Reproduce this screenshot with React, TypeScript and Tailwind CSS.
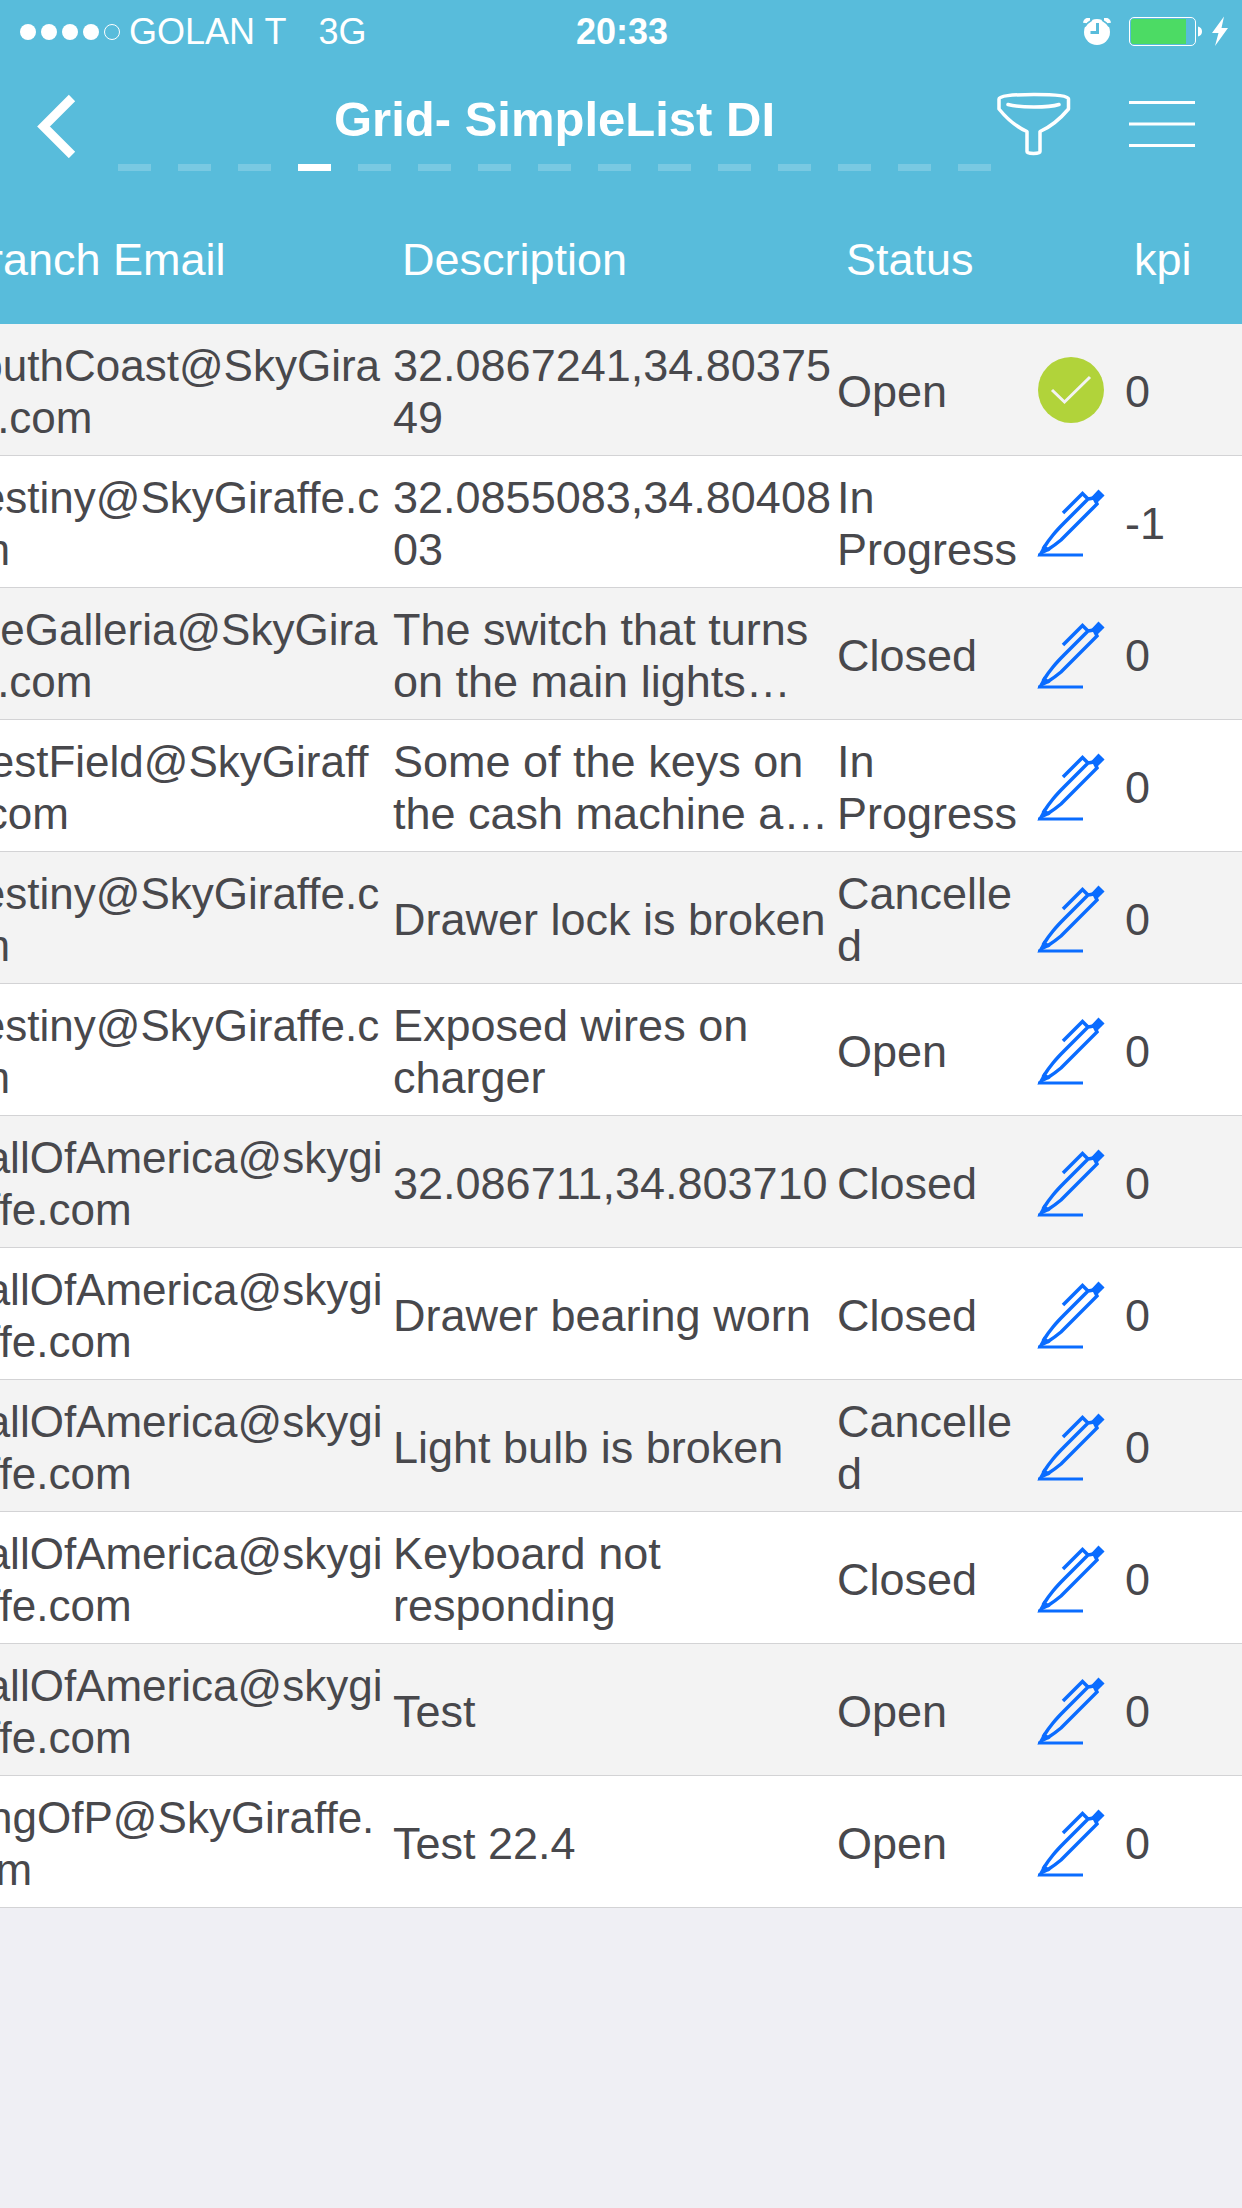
type Row = {
  email: string;
  description: string;
  status: string;
  kpi: number;
  done?: boolean;
};

const rows: Row[] = [
  { email: "SouthCoast@SkyGira\nffe.com", description: "32.0867241,34.80375\n49", status: "Open", kpi: 0, done: true },
  { email: "Destiny@SkyGiraffe.c\nom", description: "32.0855083,34.80408\n03", status: "In\nProgress", kpi: -1 },
  { email: "TheGalleria@SkyGira\nffe.com", description: "The switch that turns\non the main lights…", status: "Closed", kpi: 0 },
  { email: "WestField@SkyGiraff\ne.com", description: "Some of the keys on\nthe cash machine a…", status: "In\nProgress", kpi: 0 },
  { email: "Destiny@SkyGiraffe.c\nom", description: "Drawer lock is broken", status: "Cancelle\nd", kpi: 0 },
  { email: "Destiny@SkyGiraffe.c\nom", description: "Exposed wires on\ncharger", status: "Open", kpi: 0 },
  { email: "MallOfAmerica@skygi\nraffe.com", description: "32.086711,34.803710", status: "Closed", kpi: 0 },
  { email: "MallOfAmerica@skygi\nraffe.com", description: "Drawer bearing worn", status: "Closed", kpi: 0 },
  { email: "MallOfAmerica@skygi\nraffe.com", description: "Light bulb is broken", status: "Cancelle\nd", kpi: 0 },
  { email: "MallOfAmerica@skygi\nraffe.com", description: "Keyboard not\nresponding", status: "Closed", kpi: 0 },
  { email: "MallOfAmerica@skygi\nraffe.com", description: "Test", status: "Open", kpi: 0 },
  { email: "KingOfP@SkyGiraffe.\ncom", description: "Test 22.4", status: "Open", kpi: 0 },
];

const PAGE_COUNT = 15;
const CURRENT_PAGE = 3;

function StatusBar() {
  return (
    <div className="grid h-15 grid-cols-[1fr_auto_1fr] items-center pt-1 pr-3.5 pl-4 text-[36px] leading-10">
      <div className="flex items-center pl-1">
        <div className="flex gap-[5px]">
          {[0, 1, 2, 3].map((i) => (
            <span key={i} className="size-4 rounded-full bg-white" />
          ))}
          <span className="size-4 rounded-full border border-white" />
        </div>
        <span className="ml-[9px]">GOLAN T</span>
        <span className="ml-8">3G</span>
      </div>
      <div className="font-bold">20:33</div>
      <div className="flex items-center justify-end">
        <svg className="h-7 w-7" viewBox="0 0 28 28" fill="none" aria-label="Alarm">
          <circle cx="14" cy="14" r="13" fill="#fff" />
          <path d="M2 5Q2.500 1.500 7 1.500M21 1.500Q25.500 1.500 26 5" stroke="#fff" strokeWidth="4" />
          <path d="M2 8.500Q4.500 4.500 9 2M19 2Q23.500 4.500 26 8.500" stroke="#58bcdb" strokeWidth="1.500" />
          <path d="M14.500 5V14.500H7.500" stroke="#58bcdb" strokeWidth="3" />
        </svg>
        <svg className="ml-4.5 h-8 w-[73px]" viewBox="0 0 73 32" fill="none" aria-label="Battery charging">
          <rect x="0.500" y="1.500" width="66" height="28" rx="4.500" stroke="#fff" />
          <path d="M4 3H57V28H4Q2 28 2 25V6Q2 3 4 3Z" fill="#4cdb64" />
          <path d="M69 10.500Q73 11.500 73 15.500T69 20.500Z" fill="#fff" />
        </svg>
        <svg className="ml-2.5 h-8 w-4" viewBox="0 0 16 32" fill="#fff" aria-hidden="true">
          <path d="M12 0.500L0 17H6.500L3 30L16 12H9.500Z" />
        </svg>
      </div>
    </div>
  );
}

function NavBar() {
  return (
    <div className="flex h-[114px]">
      <button type="button" aria-label="Back" className="flex w-[118px] shrink-0 items-start pt-8.5 pl-9">
        <svg className="h-16 w-10" viewBox="0 0 40 64" fill="none" stroke="#fff" strokeWidth="9">
          <path d="M36 4L7.500 32.500L36 61" />
        </svg>
      </button>
      <div className="flex-1 pt-7">
        <h1 className="text-center text-[49px] leading-[62px] font-bold whitespace-nowrap">Grid- SimpleList DI</h1>
        <div className="mt-3.5 flex justify-between">
          {Array.from({ length: PAGE_COUNT }, (_, i) => (
            <span key={i} className={i === CURRENT_PAGE ? "h-[7px] w-[33px] bg-white" : "h-[7px] w-[33px] bg-white/20"} />
          ))}
        </div>
      </div>
      <div className="flex w-[251px] shrink-0 items-start justify-between pt-8 pr-11.5 pl-1.5">
        <button type="button" aria-label="Filter">
          <svg className="h-16 w-[74px]" viewBox="0 0 74 64" fill="none" stroke="#fff" strokeWidth="3.500" strokeLinecap="round" strokeLinejoin="round">
            <path d="M2 7Q2 2.500 37 2.500T71.500 7V17Q58 33 43 39.500V59.500Q43 61.500 36.500 61.500T30 59.500V39.500Q15 33 2 17Z" />
            <path d="M11 12.500Q20 15 37 15T62 12.500" />
          </svg>
        </button>
        <button type="button" aria-label="Menu">
          <svg className="h-16 w-[67px]" viewBox="0 0 67 64" stroke="#fff" strokeWidth="3">
            <path d="M0 10.500H66M0 32H66M0 53.500H66" />
          </svg>
        </button>
      </div>
    </div>
  );
}

function CheckIcon() {
  return (
    <svg className="size-17" viewBox="0 0 68 68" fill="none">
      <circle cx="34" cy="33" r="33" fill="#b1d33a" />
      <path d="M15 33L27.500 45L53 20" stroke="#f3f3f3" strokeWidth="3" />
    </svg>
  );
}

function PenIcon() {
  return (
    <svg className="size-17" viewBox="0 0 68 68" fill="none" stroke="#0a6cff" strokeWidth="3.500">
      <path d="M1 66H46" strokeWidth="3" />
      <path d="M26 24L45.500 4.500L51 10L28 33Q20 41 16 46Q11 52 7 58.500L11 60.500Q18 56 24 51L60 15L57 9L51 10" />
      <path d="M7 57L2 66L12 61Z" fill="#0a6cff" strokeWidth="1.500" />
      <path d="M55 8.500L61.500 1.500L66.500 6.500L60 13Z" fill="#0a6cff" strokeWidth="1.500" />
    </svg>
  );
}

export default function App() {
  return (
    <main className="min-h-screen overflow-hidden bg-[#efeff4] font-['Liberation_Sans',Arial,sans-serif]">
      <header className="bg-[#58bcdb] text-white">
        <StatusBar />
        <NavBar />
      </header>
      <table className="-ml-15 w-[calc(100%+60px)] table-fixed border-separate border-spacing-0 text-[45px] leading-[52px] text-[#48484c]">
        <colgroup>
          <col className="w-[444px]" />
          <col className="w-[444px]" />
          <col className="w-[200px]" />
          <col className="w-[88px]" />
          <col />
        </colgroup>
        <thead className="bg-[#58bcdb] text-left text-white">
          <tr className="h-[150px] *:pt-[22px] *:pl-[18px]">
            <th scope="col" className="font-normal">Branch Email</th>
            <th scope="col" className="font-normal">Description</th>
            <th scope="col" className="font-normal">Status</th>
            <td />
            <th scope="col" className="font-normal">kpi</th>
          </tr>
        </thead>
        <tbody className="whitespace-pre">
          {rows.map((row, i) => (
            <tr key={i} className="h-[132px] bg-white *:border-b *:border-[#d3d3d5] odd:bg-[#f3f3f3]">
              <td className="pt-1 pl-[9px] text-[44px]">{row.email}</td>
              <td className="pt-1 pl-[9px]">{row.description}</td>
              <td className="pt-1 pl-[9px]">{row.status}</td>
              <td className="pt-0.5 pl-[9px]">
                <button type="button" aria-label={row.done ? "Completed" : "Edit"} className="block">
                  {row.done ? <CheckIcon /> : <PenIcon />}
                </button>
              </td>
              <td className="pt-1 pl-[9px]">{row.kpi}</td>
            </tr>
          ))}
        </tbody>
      </table>
    </main>
  );
}
